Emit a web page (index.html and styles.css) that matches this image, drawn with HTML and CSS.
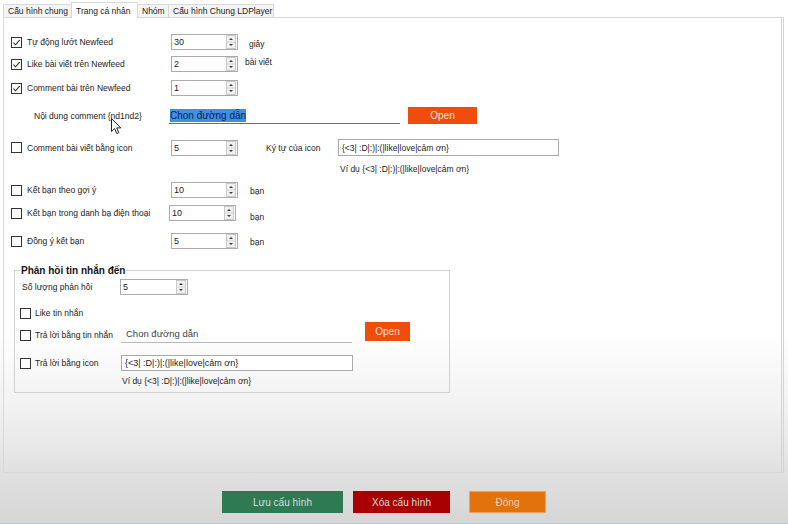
FILE: index.html
```html
<!DOCTYPE html>
<html lang="vi">
<head>
<meta charset="utf-8">
<title>Trang cá nhân</title>
<link rel="stylesheet" href="styles.css">
</head>
<body>
<div class="window">
  <div class="tabs">
    <div class="tab t1">Cấu hình chung</div>
    <div class="tab t2 active">Trang cá nhân</div>
    <div class="tab t3">Nhóm</div>
    <div class="tab t4">Cấu hình Chung LDPlayer</div>
  </div>

  <div class="page">
    <div class="row r1">
      <label class="chk"><span class="box"><svg viewBox="0 0 9 9" width="9" height="9"><path d="M1.5 4.6 L3.6 6.8 L7.6 2.2" fill="none" stroke="#2a2a2a" stroke-width="1.1"/></svg></span>Tự động lướt Newfeed</label>
      <div class="spin"><span>30</span><span class="arrows"><svg viewBox="0 0 10 14" width="10" height="14"><rect x="0.5" y="0.5" width="9" height="13" fill="#f1f1f1" stroke="#c9c9c9"/><line x1="1" y1="7" x2="9" y2="7" stroke="#d6d6d6"/><path d="M3 5 L5 3 L7 5Z" fill="#3a3a3a"/><path d="M3 9 L5 11 L7 9Z" fill="#3a3a3a"/></svg></span></div>
      <span class="unit u-giay">giây</span>
    </div>

    <div class="row r2">
      <label class="chk"><span class="box"><svg viewBox="0 0 9 9" width="9" height="9"><path d="M1.5 4.6 L3.6 6.8 L7.6 2.2" fill="none" stroke="#2a2a2a" stroke-width="1.1"/></svg></span>Like bài viết trên Newfeed</label>
      <div class="spin"><span>2</span><span class="arrows"><svg viewBox="0 0 10 14" width="10" height="14"><rect x="0.5" y="0.5" width="9" height="13" fill="#f1f1f1" stroke="#c9c9c9"/><line x1="1" y1="7" x2="9" y2="7" stroke="#d6d6d6"/><path d="M3 5 L5 3 L7 5Z" fill="#3a3a3a"/><path d="M3 9 L5 11 L7 9Z" fill="#3a3a3a"/></svg></span></div>
      <span class="unit u-bai">bài viết</span>
    </div>

    <div class="row r3">
      <label class="chk"><span class="box"><svg viewBox="0 0 9 9" width="9" height="9"><path d="M1.5 4.6 L3.6 6.8 L7.6 2.2" fill="none" stroke="#2a2a2a" stroke-width="1.1"/></svg></span>Comment bài trên Newfeed</label>
      <div class="spin"><span>1</span><span class="arrows"><svg viewBox="0 0 10 14" width="10" height="14"><rect x="0.5" y="0.5" width="9" height="13" fill="#f1f1f1" stroke="#c9c9c9"/><line x1="1" y1="7" x2="9" y2="7" stroke="#d6d6d6"/><path d="M3 5 L5 3 L7 5Z" fill="#3a3a3a"/><path d="M3 9 L5 11 L7 9Z" fill="#3a3a3a"/></svg></span></div>
    </div>

    <div class="row r4">
      <span class="indent-lbl">Nội dung comment {nd1nd2}</span>
      <div class="path focused"><span class="sel">Chon đường dẫn</span></div>
      <button class="open open-main">Open</button>
    </div>

    <div class="row r5">
      <label class="chk"><span class="box"></span>Comment bài viết bằng icon</label>
      <div class="spin"><span>5</span><span class="arrows"><svg viewBox="0 0 10 14" width="10" height="14"><rect x="0.5" y="0.5" width="9" height="13" fill="#f1f1f1" stroke="#c9c9c9"/><line x1="1" y1="7" x2="9" y2="7" stroke="#d6d6d6"/><path d="M3 5 L5 3 L7 5Z" fill="#3a3a3a"/><path d="M3 9 L5 11 L7 9Z" fill="#3a3a3a"/></svg></span></div>
      <span class="icon-lbl">Ký tự của icon</span>
      <div class="txt txt-main">{&lt;3| :D|:)|:(|like|love|cảm ơn}</div>
    </div>

    <div class="row r5b">
      <span>Ví dụ {&lt;3| :D|:)|:(|like|love|cảm ơn}</span>
    </div>

    <div class="row r6">
      <label class="chk"><span class="box"></span>Kết bạn theo gợi ý</label>
      <div class="spin"><span>10</span><span class="arrows"><svg viewBox="0 0 10 14" width="10" height="14"><rect x="0.5" y="0.5" width="9" height="13" fill="#f1f1f1" stroke="#c9c9c9"/><line x1="1" y1="7" x2="9" y2="7" stroke="#d6d6d6"/><path d="M3 5 L5 3 L7 5Z" fill="#3a3a3a"/><path d="M3 9 L5 11 L7 9Z" fill="#3a3a3a"/></svg></span></div>
      <span class="unit u-ban">bạn</span>
    </div>

    <div class="row r7">
      <label class="chk"><span class="box"></span>Kết bạn trong danh bạ điện thoại</label>
      <div class="spin spin-left"><span>10</span><span class="arrows"><svg viewBox="0 0 10 14" width="10" height="14"><rect x="0.5" y="0.5" width="9" height="13" fill="#f1f1f1" stroke="#c9c9c9"/><line x1="1" y1="7" x2="9" y2="7" stroke="#d6d6d6"/><path d="M3 5 L5 3 L7 5Z" fill="#3a3a3a"/><path d="M3 9 L5 11 L7 9Z" fill="#3a3a3a"/></svg></span></div>
      <span class="unit u-ban2">bạn</span>
    </div>

    <div class="row r8">
      <label class="chk"><span class="box"></span>Đồng ý kết bạn</label>
      <div class="spin"><span>5</span><span class="arrows"><svg viewBox="0 0 10 14" width="10" height="14"><rect x="0.5" y="0.5" width="9" height="13" fill="#f1f1f1" stroke="#c9c9c9"/><line x1="1" y1="7" x2="9" y2="7" stroke="#d6d6d6"/><path d="M3 5 L5 3 L7 5Z" fill="#3a3a3a"/><path d="M3 9 L5 11 L7 9Z" fill="#3a3a3a"/></svg></span></div>
      <span class="unit u-ban">bạn</span>
    </div>

    <fieldset class="group">
      <legend>Phản hồi tin nhắn đến</legend>
      <div class="row g1">
        <span class="g-lbl">Số lượng phản hồi</span>
        <div class="spin spin-g"><span>5</span><span class="arrows"><svg viewBox="0 0 10 14" width="10" height="14"><rect x="0.5" y="0.5" width="9" height="13" fill="#f1f1f1" stroke="#c9c9c9"/><line x1="1" y1="7" x2="9" y2="7" stroke="#d6d6d6"/><path d="M3 5 L5 3 L7 5Z" fill="#3a3a3a"/><path d="M3 9 L5 11 L7 9Z" fill="#3a3a3a"/></svg></span></div>
      </div>
      <div class="row g2">
        <label class="chk chk-g"><span class="box"></span>Like tin nhắn</label>
      </div>
      <div class="row g3">
        <label class="chk chk-g"><span class="box"></span>Trả lời bằng tin nhắn</label>
        <div class="path path-g"><span>Chon đường dẫn</span></div>
        <button class="open open-g">Open</button>
      </div>
      <div class="row g4">
        <label class="chk chk-g"><span class="box"></span>Trả lời bằng icon</label>
        <div class="txt txt-g">{&lt;3| :D|:)|:(|like|love|cảm ơn}</div>
      </div>
      <div class="row g5">
        <span>Ví dụ {&lt;3| :D|:)|:(|like|love|cảm ơn}</span>
      </div>
    </fieldset>
  </div>

  <div class="actions">
    <button class="act act-save">Lưu cấu hình</button>
    <button class="act act-del">Xóa cấu hình</button>
    <button class="act act-close">Đóng</button>
  </div>

  <svg class="cursor" width="12" height="17" viewBox="0 0 12 17"><path d="M0.5 0.5 L0.5 13.5 L3.6 10.6 L5.8 15.6 L7.8 14.7 L5.7 9.9 L9.8 9.9 Z" fill="#ffffff" stroke="#222" stroke-width="1"/></svg>
</div>
</body>
</html>
```

FILE: styles.css
```css
* { box-sizing: border-box; }

html, body { margin: 0; padding: 0; }

body {
  width: 788px;
  height: 524px;
  overflow: hidden;
  font-family: "Liberation Sans", Arial, sans-serif;
  font-size: 8.5px;
  color: #1c1c1c;
  background: linear-gradient(to bottom, #ffffff 0px, #ffffff 330px, #f1f1f1 410px, #e1e1e1 470px, #d6d6d6 522px);
  border-bottom: 1px solid #a8cddc;
}

.window {
  position: relative;
  padding: 2px 4px 0 3px;
}

/* tabs */
.tabs {
  display: flex;
  align-items: flex-end;
  height: 15px;
}
.tab {
  height: 13px;
  display: flex;
  align-items: center;
  padding-left: 4px;
  border: 1px solid #d9d9d9;
  border-bottom: none;
  background: #f4f4f4;
  margin-right: -1px;
  white-space: nowrap;
  overflow: hidden;
}
.tab.active {
  height: 16px;
  background: #ffffff;
  margin-bottom: -1px;
  position: relative;
  z-index: 1;
  padding-left: 4px;
}
.t1 { width: 69px; }
.t2 { width: 67px; }
.t3 { width: 32px; }
.t4 { width: 106px; }

/* page */
.page {
  height: 456px;
  border: 1px solid #d9d9d9;
  border-right: 3px double #d4d4d4;
  padding: 16px 0 0 7px;
}

.row {
  display: flex;
  align-items: center;
  height: 16px;
  white-space: nowrap;
}
.r2 { margin-top: 6px; }
.r3 { margin-top: 8px; }
.r4 { margin-top: 11px; height: 17px; }
.r5 { margin-top: 15px; height: 17px; }
.r5b { margin-top: 6px; height: 14px; padding-left: 329px; }
.r6 { margin-top: 6px; }
.r7 { margin-top: 7px; }
.r8 { margin-top: 12px; }

.chk {
  width: 160px;
  display: flex;
  align-items: center;
  gap: 5px;
}
.box {
  width: 11px;
  height: 11px;
  border: 1px solid #333333;
  background: #ffffff;
  flex: none;
  display: flex;
}

.spin {
  width: 67px;
  height: 16px;
  border: 1px solid #acacac;
  background: #ffffff;
  display: flex;
  align-items: center;
  justify-content: space-between;
  padding-left: 2px;
  padding-right: 1px;
  font-size: 9px;
}
.arrows { display: flex; }
.spin-left { margin-left: -2px; }

.u-giay { margin-left: 11px; padding-top: 4px; }
.u-bai { margin-left: 7px; padding-bottom: 4px; }
.u-ban { margin-left: 12px; padding-top: 2px; }
.u-ban2 { margin-left: 14px; padding-top: 8px; }

.indent-lbl {
  width: 158px;
  padding-left: 23px;
}
.path {
  width: 231px;
  height: 17px;
  border-bottom: 1px solid #b9b9b9;
  display: flex;
  align-items: center;
  padding-left: 1px;
}
.path.focused { border-bottom-color: #6262d6; }
.sel {
  background: #3f8fe2;
  color: #0e2256;
  font-size: 10px;
  padding: 1px 0;
}
.open {
  border: none;
  font-family: "Liberation Sans", Arial, sans-serif;
  font-size: 10px;
  color: #fbe5dc;
  background: #f04c0c;
  padding: 0;
}
.open-main {
  width: 69px;
  height: 17px;
  margin-left: 8px;
  align-self: flex-start;
}

.icon-lbl {
  margin-left: 28px;
  width: 72px;
}
.txt {
  height: 17px;
  border: 1px solid #a9a9a9;
  background: #ffffff;
  display: flex;
  align-items: center;
  padding-left: 3px;
}
.txt-main { width: 221px; }

/* group */
.group {
  margin: 16px 0 0 3px;
  width: 436px;
  height: 128px;
  border: 1px solid #d2d2d2;
  padding: 0 0 0 5px;
}
.group legend {
  font-size: 10px;
  font-weight: bold;
  color: #141414;
  margin-left: 0;
  padding: 0 1px;
}
.g1 { margin-top: 3px; }
.g-lbl { width: 100px; padding-left: 2px; }
.spin-g { width: 68px; }
.g2 { margin-top: 10px; }
.chk-g { width: 101px; gap: 4px; }
.g3 {
  margin-top: 1px;
  height: 21px;
  align-items: flex-end;
}
.g3 .chk { height: 16px; }
.path-g {
  width: 231px;
  height: 18px;
  color: #444;
  font-size: 9.5px;
  padding-left: 5px;
}
.open-g {
  width: 45px;
  height: 19px;
  margin-left: 13px;
  align-self: flex-start;
}
.g4 { margin-top: 12px; }
.txt-g { width: 232px; height: 16px; font-size: 9px; }
.g5 { margin-top: 4px; height: 12px; padding-left: 102px; }

/* actions */
.actions {
  display: flex;
  padding-left: 219px;
  margin-top: 18px;
}
.act {
  height: 22px;
  border: none;
  font-family: "Liberation Sans", Arial, sans-serif;
  font-size: 10px;
  color: #dcdcdc;
  padding: 0;
}
.act-save { width: 121px; background: #2d7a53; }
.act-del { width: 97px; margin-left: 10px; background: #a80001; }
.act-close { width: 77px; margin-left: 19px; background: #e1720c; border: 1px solid #eea15c; color: #f3d0ae; }

.cursor {
  position: absolute;
  left: 111px;
  top: 118px;
}
```
